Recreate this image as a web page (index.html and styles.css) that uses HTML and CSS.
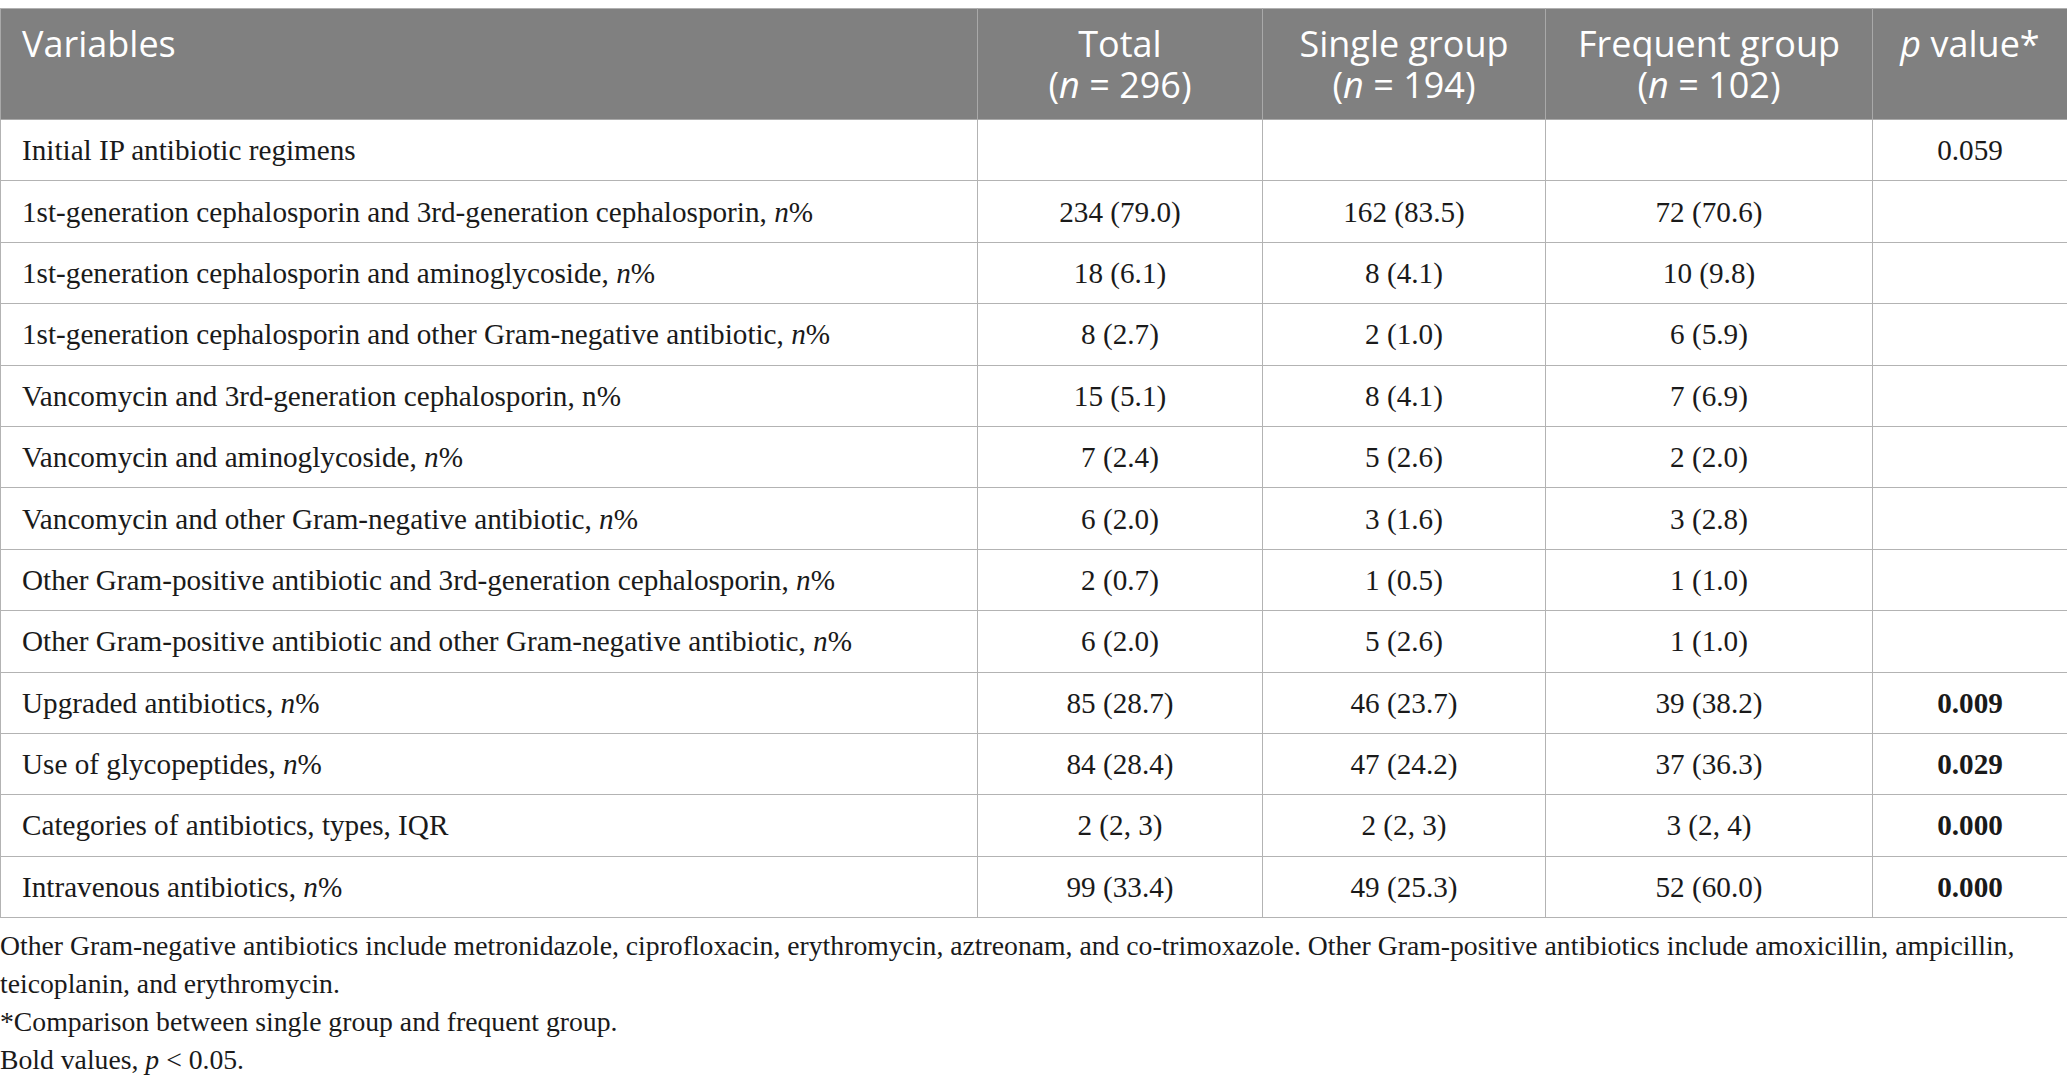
FILE: index.html
```html
<!DOCTYPE html>
<html lang="en">
<head>
<meta charset="utf-8">
<title>Antibiotic regimens table</title>
<link rel="stylesheet" href="styles.css">
</head>
<body>
<div class="page">
  <table class="data">
    <colgroup>
      <col class="c-var">
      <col class="c-total">
      <col class="c-single">
      <col class="c-freq">
      <col class="c-p">
    </colgroup>
    <thead>
      <tr>
        <th class="left"><span class="hl">Variables</span></th>
        <th><span class="hl">Total</span><span class="hl">(<i>n</i> = 296)</span></th>
        <th><span class="hl">Single group</span><span class="hl">(<i>n</i> = 194)</span></th>
        <th><span class="hl">Frequent group</span><span class="hl">(<i>n</i> = 102)</span></th>
        <th><span class="hl"><i>p</i> value*</span></th>
      </tr>
    </thead>
    <tbody>
      <tr><td class="left">Initial IP antibiotic regimens</td><td></td><td></td><td></td><td>0.059</td></tr>
      <tr><td class="left">1st-generation cephalosporin and 3rd-generation cephalosporin, <i>n</i>%</td><td>234 (79.0)</td><td>162 (83.5)</td><td>72 (70.6)</td><td></td></tr>
      <tr><td class="left">1st-generation cephalosporin and aminoglycoside, <i>n</i>%</td><td>18 (6.1)</td><td>8 (4.1)</td><td>10 (9.8)</td><td></td></tr>
      <tr><td class="left">1st-generation cephalosporin and other Gram-negative antibiotic, <i>n</i>%</td><td>8 (2.7)</td><td>2 (1.0)</td><td>6 (5.9)</td><td></td></tr>
      <tr><td class="left">Vancomycin and 3rd-generation cephalosporin, n%</td><td>15 (5.1)</td><td>8 (4.1)</td><td>7 (6.9)</td><td></td></tr>
      <tr><td class="left">Vancomycin and aminoglycoside, <i>n</i>%</td><td>7 (2.4)</td><td>5 (2.6)</td><td>2 (2.0)</td><td></td></tr>
      <tr><td class="left">Vancomycin and other Gram-negative antibiotic, <i>n</i>%</td><td>6 (2.0)</td><td>3 (1.6)</td><td>3 (2.8)</td><td></td></tr>
      <tr><td class="left">Other Gram-positive antibiotic and 3rd-generation cephalosporin, <i>n</i>%</td><td>2 (0.7)</td><td>1 (0.5)</td><td>1 (1.0)</td><td></td></tr>
      <tr><td class="left">Other Gram-positive antibiotic and other Gram-negative antibiotic, <i>n</i>%</td><td>6 (2.0)</td><td>5 (2.6)</td><td>1 (1.0)</td><td></td></tr>
      <tr><td class="left">Upgraded antibiotics, <i>n</i>%</td><td>85 (28.7)</td><td>46 (23.7)</td><td>39 (38.2)</td><td class="sig">0.009</td></tr>
      <tr><td class="left">Use of glycopeptides, <i>n</i>%</td><td>84 (28.4)</td><td>47 (24.2)</td><td>37 (36.3)</td><td class="sig">0.029</td></tr>
      <tr><td class="left">Categories of antibiotics, types, IQR</td><td>2 (2, 3)</td><td>2 (2, 3)</td><td>3 (2, 4)</td><td class="sig">0.000</td></tr>
      <tr><td class="left">Intravenous antibiotics, <i>n</i>%</td><td>99 (33.4)</td><td>49 (25.3)</td><td>52 (60.0)</td><td class="sig">0.000</td></tr>
    </tbody>
  </table>
  <div class="notes">
    <p>Other Gram-negative antibiotics include metronidazole, ciprofloxacin, erythromycin, aztreonam, and co-trimoxazole. Other Gram-positive antibiotics include amoxicillin, ampicillin, teicoplanin, and erythromycin.</p>
    <p>*Comparison between single group and frequent group.</p>
    <p>Bold values, <i>p</i> &lt; 0.05.</p>
  </div>
</div>
</body>
</html>
```

FILE: styles.css
```css
html, body {
  margin: 0;
  padding: 0;
  background: #ffffff;
}

.page {
  padding-top: 8px;
  width: 2067px;
}

.data {
  width: 2067px;
  border-collapse: collapse;
  table-layout: fixed;
  font-family: "Liberation Serif", "Times New Roman", serif;
  color: #1a1a1a;
}

.c-var { width: 977px; }
.c-total { width: 285px; }
.c-single { width: 283px; }
.c-freq { width: 327px; }
.c-p { width: 195px; }

.data th {
  background: #808080;
  color: #ffffff;
  font-family: "Open Sans", "Noto Sans", sans-serif;
  font-weight: 400;
  font-size: 36px;
  line-height: 41px;
  text-align: center;
  vertical-align: top;
  padding: 14px 10px 13px;
  height: 111px;
  box-sizing: border-box;
  border: 1px solid #a9a9a9;
  border-top-color: #b0b0b0;
}

.data th .hl {
  display: block;
  height: 41px;
  line-height: 41px;
}

.data th.left {
  text-align: left;
  padding-left: 21px;
}

.data td {
  font-size: 29.2px;
  line-height: 34px;
  height: 61.4px;
  box-sizing: border-box;
  padding: 0 10px;
  text-align: center;
  vertical-align: middle;
  border: 1px solid #b3b3b3;
  white-space: nowrap;
}

.data td.left {
  text-align: left;
  padding-left: 21px;
}

.data td.sig {
  font-weight: 700;
}

.notes {
  font-family: "Liberation Serif", "Times New Roman", serif;
  font-size: 27.7px;
  line-height: 38px;
  color: #1a1a1a;
  padding-top: 9px;
}

.notes p {
  margin: 0;
}
```
